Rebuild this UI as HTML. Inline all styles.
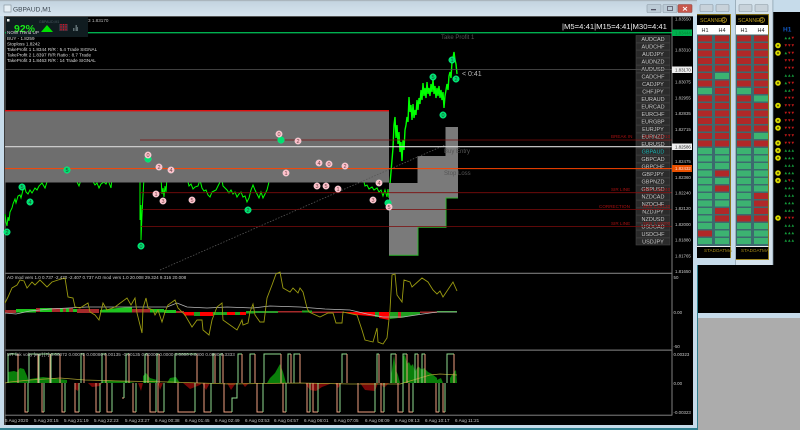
<!DOCTYPE html>
<html><head><meta charset="utf-8"><style>
html,body{margin:0;padding:0;width:800px;height:430px;overflow:hidden;background:#c6dbea}
svg{display:block;font-family:"Liberation Sans",sans-serif}
</style></head><body>
<svg width="800" height="430" viewBox="0 0 800 430" xmlns="http://www.w3.org/2000/svg">
<defs>
<linearGradient id="tb" x1="0" y1="0" x2="0" y2="1"><stop offset="0" stop-color="#9fa7ad"/><stop offset=".1" stop-color="#c4d4e0"/><stop offset="1" stop-color="#d6e4ee"/></linearGradient>
<path id="u" d="M0 1.300h2.600L1.300-1.300z" fill="#149a3a"/>
<path id="d" d="M0-1.300h2.600L1.300 1.300z" fill="#c01818"/>
<g id="ggg"><use href="#u" x="784.500"/><use href="#u" x="788"/><use href="#u" x="791.500"/></g>
<g id="rrr"><use href="#d" x="784.500"/><use href="#d" x="788"/><use href="#d" x="791.500"/></g>
<g id="ggr"><use href="#u" x="784.500"/><use href="#u" x="788"/><use href="#d" x="791.500"/></g>
<g id="grr"><use href="#u" x="784.500"/><use href="#d" x="788"/><use href="#d" x="791.500"/></g>
<g id="grg"><use href="#u" x="784.500"/><use href="#d" x="788"/><use href="#u" x="791.500"/></g>
<g id="y"><circle r="2.800" fill="#d8d800"/><circle r="1" fill="#555500"/></g>
</defs>

<!-- frame -->
<rect width="800" height="430" fill="#c6dbea"/>
<rect width="698" height="16" fill="url(#tb)"/>
<rect x="0" y="428" width="698" height="2" fill="#2f7f8f"/>
<rect x="697" y="0" width="1" height="430" fill="#2f7f8f"/>
<rect x="4" y="16" width="689" height="409" fill="#000"/>
<rect x="4.500" y="16" width="1" height="409" fill="#777"/>
<rect x="4" y="16" width="689" height="1" fill="#555"/>
<!-- title bar -->
<rect x="4" y="5" width="7" height="7" fill="#e8f0f6" stroke="#7c8a96" stroke-width=".6"/>
<text x="13" y="11.500" font-size="6.600" fill="#3c4650">GBPAUD,M1</text>
<rect x="647" y="4.500" width="14" height="8" rx="1" fill="#bccbd6" stroke="#8c9aa5" stroke-width=".6"/><rect x="651" y="9" width="5" height="1.300" fill="#556"/>
<rect x="663" y="4.500" width="14" height="8" rx="1" fill="#bccbd6" stroke="#8c9aa5" stroke-width=".6"/><rect x="667.500" y="6.500" width="5" height="4" fill="none" stroke="#556" stroke-width=".8"/>
<rect x="678" y="4.500" width="14" height="8" rx="1" fill="#c8574c" stroke="#8c4a44" stroke-width=".6"/><path d="M683 7l4 3.500M687 7l-4 3.500" stroke="#fff" stroke-width="1"/>

<!-- price -->
<path fill="none" stroke="#0f0" stroke-width="1" d="M5 214L6 222 7 226 8 217 9 221 10 212 12 208 13 204 15 199 16 203 18 196 20 195 21 198 23 190 25 188 26 192 28 194 30 190 32 193 35 188 37 190 39 186 42 183 45 188 47 182M76 180L79 186 81 180M92 180L95 185 97 183 99 188 101 184 104 182 106 184 108 180 111 188 112 178"/>
<path fill="none" stroke="#0f0" stroke-width="1" d="M140 178L140 220 141 205 141 240 142 215 143 195 144 178M161 178L162 194 163 188 164 197 165 186 166 192 167 178M187 178L189 186 191 184 193 189 195 187 198 186 200 180 202 188 204 191 206 190 208 195 210 197 212 192 214 191 216 190 218 186 220 182 222 180 223 186 225 188 227 190 229 193 231 190 233 194 235 192 237 197 239 194 241 192 243 197 245 196 247 202 249 198 251 190 253 185 255 190 257 194 259 198 261 192 263 198 265 194 267 190 269 182M363 178L365 186 367 185 369 189 372 187 374 190 377 188 379 192 381 190 383 196 385 190 387 197 388 189 389 198"/>
<path fill="none" stroke="#0f0" stroke-width="1.400" stroke-linejoin="bevel" d="M390 184L391 172 392 160 393 148 394 125 395 117 396 138 397 125 398 144 399 132 400 152 401 142 402 161 403 140 404 150 405 130 406 125 407 117 408 122 409 97 410 112 411 105 412 120 413 104 414 118 415 110 416 115 417 100 418 110 419 98 420 104 421 90 422 100 423 83 424 96 425 88 426 98 427 82 428 94 429 88 430 96 431 84 432 92 433 79 434 94 435 86 436 98 437 88 438 96 439 86 440 98 441 90 442 100 443 92 444 108 445 96 446 90 447 84 448 90 449 76 450 72 451 78 452 62 453 58 454 52 455 60 456 64 457 74"/>

<!-- gray boxes -->
<rect x="5" y="110.500" width="384" height="72" fill="#6e6e6e"/>
<path d="M389 183H417.500V156H445.500V127H458V198H446V227H418V255H389z" fill="#7a7a7a"/>
<path d="M5 110.700H389" stroke="#e01010" stroke-width="1.300"/>
<path d="M389 255.200H418V227.200H446V198H458" fill="none" stroke="#2fb52f" stroke-width="1"/>
<path d="M160 270L445 145" stroke="#555" stroke-width=".8" stroke-dasharray="1.500 1.500"/>

<!-- text on chart -->
<text x="441" y="39" font-size="6" fill="#555">Take Profit 1</text>
<text x="444" y="153" font-size="6" fill="#555">Buy Entry</text>
<text x="444" y="175" font-size="6" fill="#555">Stop Loss</text>
<text x="562" y="29" font-size="7.700" fill="#eee">|M5=4:41|M15=4:41|M30=4:41</text>
<text x="462" y="76" font-size="7" fill="#bbb">&lt; 0:41</text>

<!-- pair buttons -->
<g fill="#2b2b2b" stroke="#444" stroke-width=".6">
<rect x="636" y="35.500" width="34" height="7"/><rect x="636" y="43" width="34" height="7"/><rect x="636" y="50.500" width="34" height="7"/><rect x="636" y="58" width="34" height="7"/><rect x="636" y="65.500" width="34" height="7"/><rect x="636" y="73" width="34" height="7"/><rect x="636" y="80.500" width="34" height="7"/><rect x="636" y="88" width="34" height="7"/><rect x="636" y="95.500" width="34" height="7"/><rect x="636" y="103" width="34" height="7"/><rect x="636" y="110.500" width="34" height="7"/><rect x="636" y="118" width="34" height="7"/><rect x="636" y="125.500" width="34" height="7"/><rect x="636" y="133" width="34" height="7"/><rect x="636" y="140.500" width="34" height="7"/><rect x="636" y="148" width="34" height="7"/><rect x="636" y="155.500" width="34" height="7"/><rect x="636" y="163" width="34" height="7"/><rect x="636" y="170.500" width="34" height="7"/><rect x="636" y="178" width="34" height="7"/><rect x="636" y="185.500" width="34" height="7"/><rect x="636" y="193" width="34" height="7"/><rect x="636" y="200.500" width="34" height="7"/><rect x="636" y="208" width="34" height="7"/><rect x="636" y="215.500" width="34" height="7"/><rect x="636" y="223" width="34" height="7"/><rect x="636" y="230.500" width="34" height="7"/><rect x="636" y="238" width="34" height="7"/>
</g>
<g font-size="5.500" fill="#c4c4c4" text-anchor="middle">
<text x="653" y="41">AUDCAD</text><text x="653" y="48.500">AUDCHF</text><text x="653" y="56">AUDJPY</text><text x="653" y="63.500">AUDNZD</text><text x="653" y="71">AUDUSD</text><text x="653" y="78.500">CADCHF</text><text x="653" y="86">CADJPY</text><text x="653" y="93.500">CHFJPY</text><text x="653" y="101">EURAUD</text><text x="653" y="108.500">EURCAD</text><text x="653" y="116">EURCHF</text><text x="653" y="123.500">EURGBP</text><text x="653" y="131">EURJPY</text><text x="653" y="138.500">EURNZD</text><text x="653" y="146">EURUSD</text><text x="653" y="153.500" fill="#18b0b0">GBPAUD</text><text x="653" y="161">GBPCAD</text><text x="653" y="168.500">GBPCHF</text><text x="653" y="176">GBPJPY</text><text x="653" y="183.500">GBPNZD</text><text x="653" y="191">GBPUSD</text><text x="653" y="198.500">NZDCAD</text><text x="653" y="206">NZDCHF</text><text x="653" y="213.500">NZDJPY</text><text x="653" y="221">NZDUSD</text><text x="653" y="228.500">USDCAD</text><text x="653" y="236">USDCHF</text><text x="653" y="243.500">USDJPY</text>
</g>

<!-- horizontal lines -->
<path d="M5 32.700H672" stroke="#00b04f" stroke-width="1.300"/>
<path d="M5 69.500H672" stroke="#555" stroke-width=".8"/>
<path d="M5 146.700H672" stroke="#d8d8d8" stroke-width="1.200"/>
<path d="M5 168.600H672" stroke="#ff4500" stroke-width="1"/>
<g stroke="#7c0c0c" stroke-width=".8"><path d="M140 140H672"/><path d="M140 192.700H672"/><path d="M142 209.500H672"/><path d="M141 226.500H672"/></g>
<g font-size="4.600" fill="#a81010">
<text x="611" y="138">BREAK IN</text><text x="640" y="138">-  SRS 1.82710</text>
<text x="611" y="191">SIR LINE</text><text x="640" y="191">-  SRS 1.82240</text>
<text x="599" y="208">CORRECTION</text><text x="640" y="208">-  SRS 1.82120</text>
<text x="611" y="225">SIR LINE</text><text x="640" y="225">-  SRS 1.82000</text>
</g>

<!-- circles -->
<g fill="#00e070" stroke="#00ff88" stroke-width=".4"><circle cx="7" cy="232" r="3.300"/><circle cx="22" cy="187" r="3.300"/><circle cx="30" cy="202" r="3.300"/><circle cx="67" cy="170" r="3.300"/><circle cx="148" cy="159" r="3.300"/><circle cx="141" cy="246" r="3.300"/><circle cx="281" cy="140" r="3.300"/><circle cx="248" cy="210" r="3.300"/><circle cx="388" cy="203" r="3.300"/><circle cx="452" cy="60" r="3.300"/><circle cx="433" cy="77" r="3.300"/><circle cx="456" cy="79" r="3.300"/><circle cx="443" cy="115" r="3.300"/></g>
<g fill="#ffc0cb" stroke="#ddd" stroke-width=".3"><circle cx="148" cy="155" r="3.300"/><circle cx="159" cy="167" r="3.300"/><circle cx="171" cy="170" r="3.300"/><circle cx="156" cy="194" r="3.300"/><circle cx="163" cy="201" r="3.300"/><circle cx="192" cy="200" r="3.300"/><circle cx="279" cy="134" r="3.300"/><circle cx="298" cy="141" r="3.300"/><circle cx="286" cy="173" r="3.300"/><circle cx="319" cy="163" r="3.300"/><circle cx="329" cy="164" r="3.300"/><circle cx="345" cy="166" r="3.300"/><circle cx="317" cy="186" r="3.300"/><circle cx="326" cy="186" r="3.300"/><circle cx="338" cy="189" r="3.300"/><circle cx="379" cy="183" r="3.300"/><circle cx="373" cy="200" r="3.300"/><circle cx="389" cy="207" r="3.300"/></g>
<g font-size="5.500" fill="#243" text-anchor="middle">
<text x="7" y="234">2</text><text x="22" y="189">5</text><text x="30" y="204">4</text><text x="67" y="172">5</text><text x="141" y="248">0</text><text x="248" y="212">2</text><text x="452" y="62">1</text><text x="433" y="79">5</text><text x="456" y="81">2</text><text x="443" y="117">0</text>
<text x="148" y="157" fill="#644">0</text><text x="159" y="169" fill="#644">2</text><text x="171" y="172" fill="#644">4</text><text x="156" y="196" fill="#644">1</text><text x="163" y="203" fill="#644">3</text><text x="192" y="202" fill="#644">5</text><text x="279" y="136" fill="#644">0</text><text x="298" y="143" fill="#644">2</text><text x="286" y="175" fill="#644">1</text><text x="319" y="165" fill="#644">4</text><text x="329" y="166" fill="#644">0</text><text x="345" y="168" fill="#644">2</text><text x="317" y="188" fill="#644">3</text><text x="326" y="188" fill="#644">5</text><text x="338" y="191" fill="#644">1</text><text x="379" y="185" fill="#644">4</text><text x="373" y="202" fill="#644">3</text><text x="389" y="209" fill="#644">5</text>
</g>

<!-- top-left panel -->
<rect x="6" y="17" width="82" height="20" fill="#101c20"/>
<rect x="7" y="19" width="2.500" height="2.500" fill="#eee"/>
<text x="88" y="22" font-size="4.600" fill="#bbb">3 1.83170</text>
<text x="39" y="23" font-size="3.500" fill="#4a5a60">GBPAUD,M1</text>
<text x="14" y="32" font-size="10.500" font-weight="bold" fill="#19e619">92%</text>
<path d="M41 32h12l-6-7z" fill="#00e000"/>
<rect x="59" y="24" width="9" height="7" fill="#30303c"/><path d="M61 24v7M63.500 24v7M66 24v7" stroke="#e01020" stroke-width="1.300" stroke-dasharray="1 .7"/>
<path d="M73 31v-3h1.500v3zM75.500 31v-6h1.500v6zM78 31v-4h-1v4z" fill="#5c6c70"/>
<g font-size="4.600" fill="#ddd">
<text x="7" y="34">NOW  Trend   UP</text>
<text x="7" y="40">BUY - 1.8259</text>
<text x="7" y="45.500">Stoploss 1.8242</text>
<text x="7" y="51">TakeProfit 1 1.8344 R/R : 5.4  Trade SIGNAL</text>
<text x="7" y="56.500">TakeProfit 2 1.8397 R/R Ratio : 8.7 Trade</text>
<text x="7" y="62">TakeProfit 3 1.8463 R/R : 14 Trade SIGNAL</text>
</g>

<!-- separators and axes -->
<rect x="5" y="272.700" width="667" height="1.300" fill="#6a6a6a"/>
<rect x="5" y="349.500" width="667" height="1.300" fill="#6a6a6a"/>
<rect x="5" y="414.700" width="667" height="1" fill="#808080"/>
<rect x="671.500" y="16" width="1" height="399.500" fill="#808080"/>

<!-- AO histogram -->
<rect x="5" y="310" width="11" height="3" fill="#a52a2a"/>
<rect x="16" y="309" width="20" height="3.500" fill="#1fc41f"/>
<rect x="36" y="308" width="4" height="4" fill="#a52a2a"/>
<rect x="40" y="308" width="12" height="4" fill="#1fc41f"/>
<rect x="52" y="308" width="8" height="4" fill="#a52a2a"/><rect x="60" y="308" width="3" height="4" fill="#1fc41f"/><rect x="63" y="308" width="3" height="4" fill="#a52a2a"/><rect x="66" y="308" width="3" height="4" fill="#1fc41f"/><rect x="69" y="308" width="4" height="4" fill="#a52a2a"/><rect x="73" y="309" width="4" height="3" fill="#1fc41f"/>
<rect x="77" y="309" width="22" height="4" fill="#a52a2a"/>
<path d="M100 312.500L100 310 118 308 132 307V312.500z" fill="#1fc41f"/>
<rect x="132" y="309" width="18" height="3.500" fill="#a52a2a"/>
<rect x="150" y="309" width="14" height="3.500" fill="#1fc41f"/><rect x="164" y="310" width="12" height="3" fill="#1fc41f"/>
<rect x="176" y="311" width="8" height="2" fill="#a52a2a"/>
<rect x="184" y="312" width="10" height="3.500" fill="#f00"/><rect x="194" y="312" width="6" height="4" fill="#1f9f1f"/><rect x="200" y="312" width="13" height="4" fill="#f00"/><rect x="213" y="312" width="14" height="3" fill="#1fa81f"/><rect x="227" y="312" width="8" height="3" fill="#f00"/><rect x="235" y="312" width="5" height="3" fill="#1fa81f"/><rect x="240" y="312" width="6" height="3" fill="#f00"/><rect x="246" y="311" width="8" height="2.500" fill="#1fa81f"/>
<rect x="254" y="311" width="24" height="2" fill="#2a9a2a"/><rect x="278" y="311" width="24" height="1.500" fill="#a52a2a"/><rect x="302" y="310.500" width="10" height="2" fill="#1fa81f"/><rect x="312" y="311.500" width="32" height="1.500" fill="#a52a2a"/>
<path d="M343 312H375V316.500L358 315z" fill="#f00"/><rect x="375" y="312" width="4" height="5" fill="#1f9f1f"/><path d="M379 312H389V320L379 318z" fill="#f00"/>
<path d="M390 312H398V318L390 319z" fill="#1f9f1f"/><rect x="398" y="312" width="3" height="6" fill="#d02020"/><path d="M401 312H420V314L401 318z" fill="#1f9f1f"/><rect x="420" y="311.500" width="17" height="1.500" fill="#a52a2a"/><rect x="437" y="311" width="20" height="1.500" fill="#1fa81f"/>
<path fill="none" stroke="#b8b8b8" stroke-width=".8" d="M5 313L16 314 30 311 50 309 87 307 125 307 167 307 177 303 187 307 207 308 227 307 253 308 270 306 300 307 325 309 350 310 367 314 383 317 403 317 423 314 437 312 457 312"/>
<path fill="none" stroke="#9a9a10" stroke-width=".9" d="M5 303L8 297 12 288 17 285 20 280 24 281 27 288 32 282 35 285 40 280 47 287 52 282 58 280 65 278 68 297 73 298 75 307 80 308 88 303 90 312 95 315 99 320 103 303 107 310 115 307 127 298 131 305 135 298 137 313 142 333 143 308 146 298 148 308 153 310 155 315 158 310 162 322 165 312 168 305 175 300 178 308 185 315 192 327 197 320 202 320 203 330 209 335 212 320 217 307 222 303 223 320 230 325 237 330 242 320 243 325 248 323 250 312 253 304 255 315 260 322 264 322 267 298 272 285 276 274 280 272 283 288 290 292 293 288 298 293 300 288 303 292 307 308 309 312 320 317 328 313 333 313 336 323 342 323 343 312 357 315 362 330 365 340 373 342 377 328 378 342 383 344 387 338 390 310 392 275 395 274 397 295 402 302 404 280 410 282 412 287 422 278 428 282 433 290 437 294 440 291 443 297 453 282 457 291"/>
<text x="7" y="279" font-size="4.500" fill="#ccc">AO mod vers 1.0 0.737 -2.470 -2.407 0.737  AO mod vers 1.0 20.008 29.324 9.316 20.008</text>

<!-- MT histogram -->
<g fill="#0a7f0a">
<path d="M8 383V372L14 371 17 372 20 368 24 369 27 376 29 383z"/><path d="M30 383V379L43 377 67 380V383z"/><path d="M143 383V376L146 373 150 378 157 380V383z"/><path d="M167 383L170 378 176 377 180 383z"/>
<path d="M267 383L270 378 275 373 280 364 283 372 286 383z"/><path d="M390 383L392 370 394 355 396 370 398 375 400 383z"/><path d="M403 383V356L405 355 407 364 409 362 411 366 413 364 415 372 418 366 422 370 424 368 428 372 432 374 437 378V383z"/><path d="M437 383V380L441 378 443 383z"/><path d="M450 383V378L454 372 456 370 457 383z"/>
<path d="M100 383L105 380 125 381 135 383z"/>
</g>
<g fill="#7a0808">
<path d="M75 383V389L78 391 80 383z"/><path d="M88 383L92 387 100 386 102 383z"/><path d="M138 383L141 391 143 383z"/><path d="M158 383L160 390 163 383z"/><path d="M183 383L190 389 200 385 202 383z"/><path d="M202 383L206 390 210 383z"/><path d="M227 383L231 390 236 383z"/><path d="M242 383L245 387 249 383z"/>
<path d="M305 383L310 390 316 391 322 387 330 384V383z"/><path d="M335 383L338 388 342 383z"/><path d="M360 383L365 390 375 391 378 383z"/><path d="M380 383L384 388 389 383z"/>
</g>
<path fill="none" stroke="#a8a030" stroke-width=".8" d="M5 383L10 382 30 380 60 378 85 380 120 381 170 382 230 384 300 383 350 384 400 384 420 378 430 375 440 374 457 375"/>
<!-- MT step lines: top pulses -->
<path fill="none" stroke="#90dc90" stroke-width="1" d="M8 383V354H18M29 383V354H38M39 383V354H50M51 383V354H60M81 383V354H84M102 383V354H106M126 383V354H129M145 383V354H148M157 383V354H159M175 383V354H197M213 383V354H215M220 383V354H223M238 383V354H242M250 383V354H255M264 383V354H281M288 383V354H291M294 383V354H300M342 383V354H347M377 383V354H379M391 383V354H396M403 383V354H407M415 383V354H418M422 383V354H425M447 383V354H454"/>
<path fill="none" stroke="#f0a080" stroke-width="1" d="M18 354V383M38 354V383M50 354V383M60 354V383M84 354V383M106 354V383M129 354V383M148 354V383M159 354V383M197 354V383M215 354V383M223 354V383M242 354V383M255 354V383M281 354V383M291 354V383M300 354V383M347 354V383M379 354V383M396 354V383M407 354V383M418 354V383M425 354V383M454 354V383"/>
<path fill="none" stroke="#f0a080" stroke-width="1" d="M25 383V412H28M42 383V412H44M62 383V412H65M75 383V412H79M96 383V412H100M107 383V412H112M122 398H124M133 383V412H136M150 383V412H156M158 383V412H164M178 383V412H195M204 383V412H211M224 383V412H232M257 383V412H263M283 383V412H286M307 383V412H310M313 383V412H318M337 383V412H340M358 383V412H375M381 383V412H384M398 383V412H403M409 383V412H413M436 383V412H439M443 383V412H445"/>
<path fill="none" stroke="#90dc90" stroke-width="1" d="M28 412V383M44 412V383M65 412V383M79 412V383M100 412V383M112 412V383M124 398V383M136 412V383M156 412V383M164 412V383M195 412V383M211 412V383M232 412V398H237V383M263 412V383M286 412V383M310 412V383M318 412V383M340 412V383M375 412V383M384 412V383M403 412V383M413 412V383M439 412V383M445 412V383"/>
<text x="7" y="356" font-size="4.600" fill="#bbb">MT link volty [eur] [?] 0.00072 0.00072 0.00086 0.00135 -0.00135 0.00000  0.0000 0.0000 0.0000 0.0000 0.3333</text>

<!-- axis labels -->
<rect x="672" y="29.500" width="20" height="6.500" fill="#00b04f"/>
<rect x="672" y="66.500" width="20" height="6.500" fill="#eee"/>
<rect x="672" y="143.500" width="20" height="6.500" fill="#eee"/>
<rect x="672" y="165" width="20" height="7" fill="#e85000"/>
<g font-size="4.400" fill="#c8c8c8">
<text x="675" y="20.500">1.83550</text><text x="675" y="34.500" fill="#083">1.83444</text><text x="675" y="51.500">1.83310</text><text x="675" y="71.500" fill="#333">1.83170</text><text x="675" y="83.500">1.83075</text><text x="675" y="99.500">1.82955</text><text x="675" y="115">1.82835</text><text x="675" y="131">1.82715</text><text x="675" y="148.500" fill="#222">1.82586</text><text x="675" y="163">1.82475</text><text x="675" y="170" fill="#fdd">1.82432</text><text x="675" y="179">1.82360</text><text x="675" y="194.500">1.82240</text><text x="675" y="210">1.82120</text><text x="675" y="226">1.82000</text><text x="675" y="241.500">1.81880</text><text x="675" y="257.500">1.81765</text><text x="675" y="273">1.81650</text>
<text x="673.500" y="279">50</text><text x="673.500" y="314">0.00</text><text x="673.500" y="348">-50</text><text x="673.500" y="356">0.00323</text><text x="673.500" y="385">0.00</text><text x="673.500" y="414">-0.00323</text>
</g>
<g font-size="4.600" fill="#c8c8c8">
<text x="5" y="422">5 Aug 2020</text><text x="34" y="422">5 Aug 20:15</text><text x="64" y="422">5 Aug 21:19</text><text x="94" y="422">5 Aug 22:23</text><text x="125" y="422">5 Aug 23:27</text><text x="155" y="422">6 Aug 00:38</text><text x="185" y="422">6 Aug 01:45</text><text x="215" y="422">6 Aug 02:49</text><text x="245" y="422">6 Aug 03:53</text><text x="274" y="422">6 Aug 04:57</text><text x="304" y="422">6 Aug 06:01</text><text x="334" y="422">6 Aug 07:05</text><text x="365" y="422">6 Aug 08:09</text><text x="395" y="422">6 Aug 09:13</text><text x="425" y="422">6 Aug 10:17</text><text x="455" y="422">6 Aug 11:21</text>
</g>

<!-- right region -->
<rect x="698" y="0" width="102" height="313" fill="#000"/>
<rect x="698" y="313" width="102" height="5" fill="#c6dbea"/>
<rect x="698" y="318" width="102" height="112" fill="#acacac"/>
<rect x="773" y="0" width="27" height="12" fill="#c6dbea"/>

<!-- scanner windows -->
<rect x="697" y="0" width="38" height="265" fill="#c6dbea"/>
<rect x="735" y="0" width="38" height="265" fill="#d4e2ec"/>
<rect x="735" y="0" width=".8" height="265" fill="#8ea2b0"/>
<rect x="772.500" y="0" width=".8" height="265" fill="#8ea2b0"/>
<g fill="#c8d2da" stroke="#8a98a2" stroke-width=".6">
<rect x="700" y="4.500" width="13" height="7" rx="1"/><rect x="716" y="4.500" width="13" height="7" rx="1"/><rect x="739" y="4.500" width="13" height="7" rx="1"/><rect x="755" y="4.500" width="13" height="7" rx="1"/>
</g>
<rect x="697" y="14" width="34" height="244" fill="#000"/>
<rect x="736" y="14" width="33" height="246" fill="#000"/>
<path d="M730.500 14V258M697 14.700H731M768.500 14V260M736 14.700H769M736 259.500H769" stroke="#a08820" stroke-width=".9" fill="none"/>
<g font-size="5.200" fill="#b89a20"><text x="700" y="22">SCANNER</text><text x="738" y="22">SCANNER</text></g>
<g fill="none" stroke="#b89a20" stroke-width=".8"><circle cx="724" cy="20" r="2.500"/><circle cx="762" cy="20" r="2.500"/></g>
<rect x="697" y="25" width="33" height="9.500" fill="#fff"/><rect x="736" y="25" width="32" height="9.500" fill="#fff"/>
<g font-size="5.500" fill="#222" text-anchor="middle"><text x="705" y="32">H1</text><text x="722" y="32">H4</text><text x="744" y="32">H1</text><text x="761" y="32">H4</text></g>
<rect x="697" y="34.500" width="33" height="211.500" fill="#3c6a6e"/><rect x="736" y="34.500" width="32" height="211.500" fill="#3c6a6e"/>
<g stroke="#b02828" stroke-width="14" stroke-dasharray="6 1.500" fill="none"><path d="M705 35.500V245.500"/><path d="M722 35.500V245.500"/><path d="M744 35.500V245.500"/><path d="M761 35.500V245.500"/></g>
<path fill="#3cb371" d="M698 88h14v6h-14zM698 148h14v6h-14zM698 155.500h14v6h-14zM698 163h14v6h-14zM698 170.500h14v6h-14zM698 178h14v6h-14zM698 185.500h14v6h-14zM698 193h14v6h-14zM698 200.500h14v6h-14zM698 208h14v6h-14zM698 215.500h14v6h-14zM698 223h14v6h-14zM698 238h14v6h-14zM715 73h14v6h-14zM715 148h14v6h-14zM715 155.500h14v6h-14zM715 163h14v6h-14zM715 178h14v6h-14zM715 193h14v6h-14zM715 200.500h14v6h-14zM715 223h14v6h-14zM715 230.500h14v6h-14zM715 238h14v6h-14zM737 88h14v6h-14zM737 148h14v6h-14zM737 155.500h14v6h-14zM737 163h14v6h-14zM737 170.500h14v6h-14zM737 178h14v6h-14zM737 185.500h14v6h-14zM737 193h14v6h-14zM737 200.500h14v6h-14zM737 208h14v6h-14zM737 223h14v6h-14zM737 230.500h14v6h-14zM737 238h14v6h-14zM754 95.500h14v6h-14zM754 133h14v6h-14zM754 148h14v6h-14zM754 155.500h14v6h-14zM754 163h14v6h-14zM754 170.500h14v6h-14zM754 178h14v6h-14zM754 185.500h14v6h-14zM754 223h14v6h-14zM754 230.500h14v6h-14zM754 238h14v6h-14z"/>
<rect x="697" y="246" width="33.500" height="1" fill="#eee"/><rect x="736" y="246" width="32.500" height="1" fill="#eee"/>
<g font-size="4.600" fill="#a88c18"><text x="704" y="252">STADOATMA</text><text x="741" y="252">STADOATMA</text></g>

<!-- right arrows panel -->
<text x="783" y="31.500" font-size="6.500" font-weight="bold" fill="#1058c0">H1</text>
<use href="#ggr" y="38"/><use href="#rrr" y="45.500"/><use href="#grr" y="53"/><use href="#rrr" y="60.500"/><use href="#rrr" y="68"/><use href="#ggg" y="75.500"/><use href="#grr" y="83"/><use href="#ggr" y="90.500"/><use href="#rrr" y="98"/><use href="#rrr" y="105.500"/><use href="#rrr" y="113"/><use href="#rrr" y="120.500"/><use href="#rrr" y="128"/><use href="#rrr" y="135.500"/><use href="#rrr" y="143"/><use href="#ggg" y="150.500"/><use href="#ggg" y="158"/><use href="#ggg" y="165.500"/><use href="#ggg" y="173"/><use href="#grg" y="180.500"/><use href="#ggg" y="188"/><use href="#ggg" y="195.500"/><use href="#ggg" y="203"/><use href="#ggg" y="210.500"/><use href="#rrr" y="218"/><use href="#ggg" y="225.500"/><use href="#ggg" y="233"/><use href="#ggg" y="240.500"/>
<use href="#y" x="778" y="45.500"/><use href="#y" x="778" y="53"/><use href="#y" x="778" y="83"/><use href="#y" x="778" y="105.500"/><use href="#y" x="778" y="120.500"/><use href="#y" x="778" y="128"/><use href="#y" x="778" y="143"/><use href="#y" x="778" y="150.500"/><use href="#y" x="778" y="158"/><use href="#y" x="778" y="173"/><use href="#y" x="778" y="180.500"/><use href="#y" x="778" y="218"/>
</svg>
</body></html>
